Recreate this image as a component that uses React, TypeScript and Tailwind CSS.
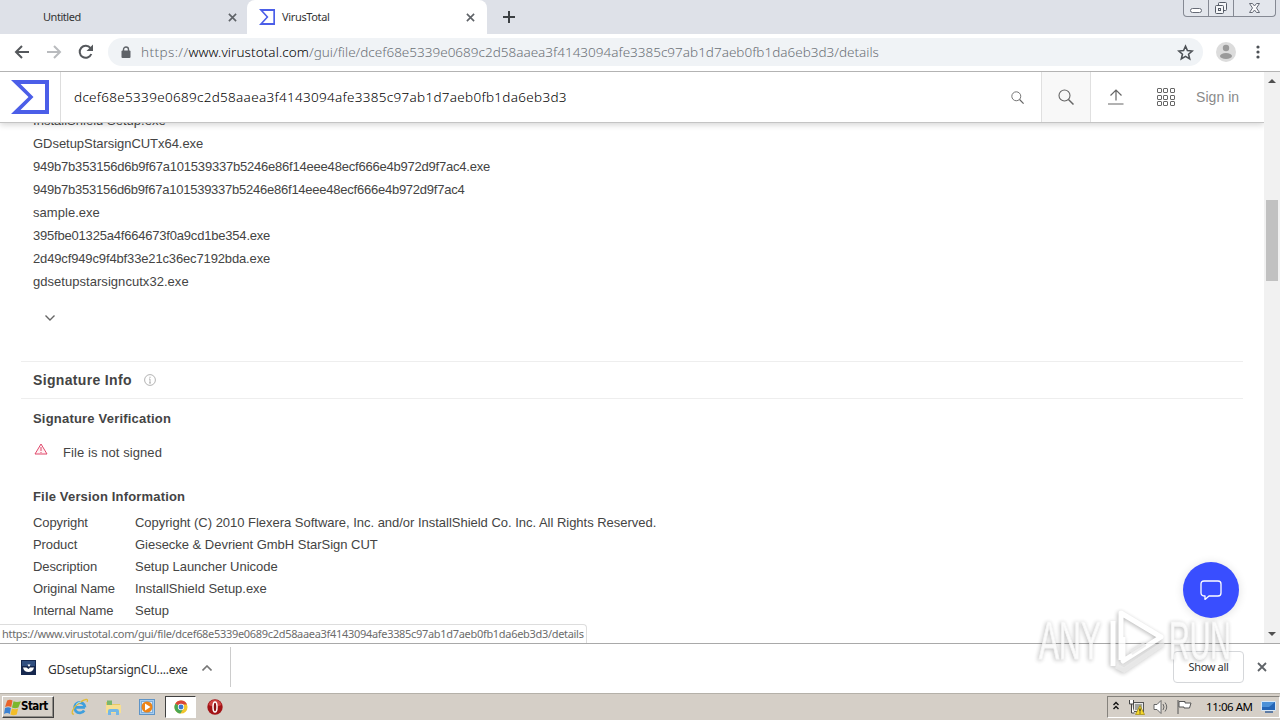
import React from "react";

const HASH = "dcef68e5339e0689c2d58aaea3f4143094afe3385c97ab1d7aeb0fb1da6eb3d3";

const NAMES = [
  { name: "InstallShield Setup.exe", tracking: "tracking-[0.02px]" },
  { name: "GDsetupStarsignCUTx64.exe", tracking: "tracking-[-0.04px]" },
  { name: "949b7b353156d6b9f67a101539337b5246e86f14eee48ecf666e4b972d9f7ac4.exe", tracking: "tracking-[-0.21px]" },
  { name: "949b7b353156d6b9f67a101539337b5246e86f14eee48ecf666e4b972d9f7ac4", tracking: "tracking-[-0.24px]" },
  { name: "sample.exe", tracking: "tracking-[0.04px]" },
  { name: "395fbe01325a4f664673f0a9cd1be354.exe", tracking: "tracking-[-0.2px]" },
  { name: "2d49cf949c9f4bf33e21c36ec7192bda.exe", tracking: "tracking-[-0.14px]" },
  { name: "gdsetupstarsigncutx32.exe", tracking: "tracking-[0.04px]" },
];

const VERSION_INFO = [
  ["Copyright", "Copyright (C) 2010 Flexera Software, Inc. and/or InstallShield Co. Inc. All Rights Reserved."],
  ["Product", "Giesecke & Devrient GmbH StarSign CUT"],
  ["Description", "Setup Launcher Unicode"],
  ["Original Name", "InstallShield Setup.exe"],
  ["Internal Name", "Setup"],
];

function Cross({ className }: { className: string }) {
  return (
    <svg viewBox="0 0 10 10" className={className} fill="none" stroke="#5f6368" strokeWidth="1.8">
      <path d="M1 1l8 8M9 1l-8 8" />
    </svg>
  );
}

function Sigma({ className }: { className: string }) {
  return (
    <svg viewBox="0 0 38 34" className={className} preserveAspectRatio="none">
      <path d="M0 0h38v34H0l17.5-17z M9.5 4l13 13-13 13H34V4z" fill="#4b5ee8" fillRule="evenodd" />
    </svg>
  );
}

function Magnifier({ className }: { className: string }) {
  return (
    <svg viewBox="0 0 16 16" className={className} fill="none" stroke="#666" strokeWidth="1.1">
      <circle cx="6.5" cy="6.5" r="5.5" />
      <path d="M10.5 10.5l5 5" strokeWidth="1.5" />
    </svg>
  );
}

function TabStrip() {
  return (
    <div className="relative flex h-[34px] shrink-0 bg-[#dee1e8] text-[11px] text-[#333]">
      <div className="flex w-[247px] items-center rounded-br-lg pl-[43px] pr-[10px]">
        <span className="tracking-[-0.45px]">Untitled</span>
        <Cross className="ml-auto size-[9px]" />
      </div>
      <div className="flex w-[240px] items-center rounded-t-lg bg-white pl-3 pr-3">
        <Sigma className="h-4 w-[16px]" />
        <span className="ml-[7px] tracking-[-0.35px]">VirusTotal</span>
        <Cross className="ml-auto size-[9px]" />
      </div>
      <div className="flex items-center pl-4">
        <svg viewBox="0 0 12 12" className="size-3" stroke="#3c4043" strokeWidth="2">
          <path d="M6 0v12M0 6h12" />
        </svg>
      </div>
      <div className="ml-auto mr-[4px] flex h-[17px] w-[93px] rounded-b border border-t-0 border-[#858993] bg-[#e3e6ec]">
        <div className="flex w-[25px] items-end justify-center border-r border-[#858993] pb-[3px]">
          <div className="h-[5px] w-[12px] rounded-sm border border-[#666b76] bg-white" />
        </div>
        <div className="flex w-[25px] items-center justify-center border-r border-[#858993]">
          <svg viewBox="0 0 14 14" className="size-[14px]" fill="#f5f6f8" stroke="#555b66">
            <rect x="4.5" y="1.5" width="8" height="8" rx="1" />
            <rect x="1.5" y="4.5" width="8" height="8" rx="1" />
            <rect x="4.5" y="7.5" width="2" height="2" />
          </svg>
        </div>
        <div className="flex grow items-center justify-center">
          <svg viewBox="0 0 13 12" className="h-3 w-[13px]" fill="#f8f8fa" stroke="#666b76">
            <path d="M1.500 1.500h3L6.500 4l2-2.500h3L8.500 6l3 4.500h-3L6.500 8l-2 2.500h-3L4.500 6z" />
          </svg>
        </div>
      </div>
    </div>
  );
}

function AddressBar() {
  return (
    <div className="flex h-[38px] shrink-0 items-center border-b border-[#b3b3b3] bg-white pb-px pl-[14px]">
      <svg viewBox="0 0 16 14" className="h-[14px] w-4" fill="none" stroke="#55585c" strokeWidth="2">
        <path d="M15 7H2M8 1L2 7l6 6" />
      </svg>
      <svg viewBox="0 0 16 14" className="ml-4 h-[14px] w-4" fill="none" stroke="#b9bbbe" strokeWidth="2">
        <path d="M1 7h13M8 1l6 6-6 6" />
      </svg>
      <svg viewBox="0 0 16 16" className="ml-4 size-4" fill="none" stroke="#55585c" strokeWidth="2">
        <path d="M13.300 10A6 6 0 1 1 12.500 4.200" />
        <path d="M15 0.500v6.500H8.500z" fill="#55585c" stroke="none" />
      </svg>
      <div className="ml-[14px] flex h-7 w-[1095px] items-center rounded-full bg-[#f0f3f6] pl-[13px] pr-[9px]">
        <svg viewBox="0 0 10 13" className="h-[13px] w-[10px]">
          <path d="M2.500 5V3.500a2.500 2.500 0 0 1 5 0V5" fill="none" stroke="#5f6368" strokeWidth="1.400" />
          <rect x="0.500" y="4.500" width="9" height="7.500" rx="1" fill="#5f6368" />
        </svg>
        <span className="ml-[10px] mt-px whitespace-nowrap text-[13.500px] font-light text-[#6c7176]">
          <span className="tracking-[0.400px]">https://</span>
          <span className="tracking-[0.080px] text-black">www.virustotal.com</span>
          <span className="tracking-[0.005px]">/gui/file/{HASH}/details</span>
        </span>
        <svg viewBox="0 0 24 24" className="ml-auto size-[17px]" fill="none" stroke="#4d5156" strokeWidth="2.200">
          <path d="M12 3l2.700 6.300 6.800.6-5.200 4.500 1.600 6.700L12 17.500l-5.900 3.600 1.600-6.700-5.200-4.500 6.800-.6z" />
        </svg>
      </div>
      <svg viewBox="0 0 20 20" className="ml-[13px] size-5">
        <circle cx="10" cy="10" r="10" fill="#dcdcdc" />
        <circle cx="10" cy="6" r="3.200" fill="#9a9a9a" />
        <ellipse cx="10" cy="14" rx="6" ry="3" fill="#9a9a9a" />
      </svg>
      <svg viewBox="0 0 4 14" className="ml-[20px] h-[14px] w-1" fill="#4d5156">
        <circle cx="2" cy="2" r="1.600" />
        <circle cx="2" cy="7" r="1.600" />
        <circle cx="2" cy="12" r="1.600" />
      </svg>
    </div>
  );
}

function SiteHeader() {
  return (
    <header className="relative z-10 flex h-[51px] shrink-0 border-b border-[#c4c4c4] bg-white shadow-[0_2px_6px_rgba(0,0,0,0.16)]">
      <div className="flex w-[61px] items-center border-r border-[#ddd] pl-[11px]">
        <Sigma className="h-[34px] w-[38px]" />
      </div>
      <div className="flex grow items-center pl-[13px] pr-[17px]">
        <span className="mt-px text-[13.500px] font-light tracking-[0.300px] text-black">{HASH}</span>
        <Magnifier className="ml-auto size-[13px]" />
      </div>
      <div className="flex w-[50px] items-center justify-center border-x border-[#e0e0e0] bg-[#f8f8f8]">
        <Magnifier className="size-4" />
      </div>
      <div className="flex w-[173px] items-center pl-[16px]">
        <svg viewBox="0 0 18 16" className="h-4 w-[18px]" fill="none" stroke="#666" strokeWidth="1.200">
          <path d="M9 11.500V1M3.500 6.500L9 1l5.500 5.500M1 15h15.500" />
        </svg>
        <svg viewBox="0 0 19 20" className="ml-[31px] h-5 w-[19px]" fill="none" stroke="#666" strokeWidth="1">
          {[1.5, 8.5, 14.5].map((y) =>
            [1.5, 7.5, 14.5].map((x) => <rect key={`${x}-${y}`} x={x} y={y} width="4" height="4" rx="0.500" />)
          )}
        </svg>
        <span className="ml-[21px] whitespace-nowrap font-['Liberation_Sans',sans-serif] text-[14px] tracking-[0.050px] text-[#8a8a8a]">Sign in</span>
      </div>
    </header>
  );
}

function Details() {
  return (
    <main className="h-[520px] overflow-hidden px-[21px] font-['Liberation_Sans',sans-serif] text-[13px] text-[#444]">
      <ul className="-mt-[14px] pl-3 leading-[23px]">
        {NAMES.map(({ name, tracking }) => (
          <li key={name} className={tracking}>{name}</li>
        ))}
      </ul>
      <svg viewBox="0 0 10 6" className="ml-[24px] mt-[22px] h-[6px] w-[10px]" fill="none" stroke="#666" strokeWidth="1.400">
        <path d="M0.500 0.500L5 5l4.500-4.500" />
      </svg>
      <h2 className="mt-[40px] flex h-[38px] items-center border-y border-[#eee] pl-3 text-[14px] font-bold tracking-[0.340px]">
        Signature Info
        <svg viewBox="0 0 12 12" className="ml-3 size-3" fill="none" stroke="#aaa" strokeWidth="0.900">
          <circle cx="6" cy="6" r="5.400" />
          <path d="M6 5v4M6 2.700v1.300M5 5h1M5 9h2" />
        </svg>
      </h2>
      <div className="pl-3">
        <h3 className="mt-[10px] text-[13px] font-bold leading-5 tracking-[0.200px]">Signature Verification</h3>
        <p className="mt-[14px] flex h-5 items-center tracking-[0.080px]">
          <svg viewBox="0 0 14 12" className="-mt-[8px] ml-[1px] h-3 w-[14px]" fill="#fff0f3" stroke="#e0486b" strokeWidth="1">
            <path d="M7 1l6 10H1z" />
            <path d="M7 4v4M7 9v1" />
          </svg>
          <span className="ml-[15px]">File is not signed</span>
        </p>
        <h3 className="mt-6 text-[13px] font-bold leading-5 tracking-[0.170px]">File Version Information</h3>
        <dl className="mt-[5px] grid grid-cols-[102px_1fr] leading-[22px] tracking-[-0.020px]">
          {VERSION_INFO.map(([k, v]) => (
            <React.Fragment key={k}>
              <dt className="tracking-[-0.090px]">{k}</dt>
              <dd>{v}</dd>
            </React.Fragment>
          ))}
        </dl>
      </div>
    </main>
  );
}

function Scrollbar() {
  return (
    <div className="flex w-4 shrink-0 flex-col items-center bg-[#f1f1f1]">
      <svg viewBox="0 0 8 4" className="mt-[7px] h-1 w-2 shrink-0" fill="#505050"><path d="M0 4l4-4 4 4z" /></svg>
      <div className="mt-[117px] h-[81px] w-3 bg-[#c1c1c1]" />
      <svg viewBox="0 0 8 4" className="mb-[7px] mt-auto h-1 w-2 shrink-0" fill="#505050"><path d="M0 0l4 4 4-4z" /></svg>
    </div>
  );
}

function DownloadBar() {
  return (
    <div className="flex h-[50px] shrink-0 items-center border-t border-[#a9a9a9] bg-white pb-[3px] pr-[13px] text-[#333]">
      <div className="flex h-10 w-[231px] items-center border-r border-[#ccc] pl-[21px]">
        <svg viewBox="0 0 15 15" className="size-[15px]">
          <rect width="15" height="15" fill="#16284e" />
          <path d="M1 1h13v5H1z" fill="#304f80" />
          <path d="M2 7.500h3.500l2 1.500 1.500-1.500h4q-1 4.500-5.500 4.500T2 7.500zM6.500 4.500h3l-1.500 2.500z" fill="#fff" />
        </svg>
        <span className="ml-3 mt-[5px] text-[12px] tracking-[-0.17px]">GDsetupStarsignCU....exe</span>
        <svg viewBox="0 0 10 6" className="ml-auto mr-[18px] mt-[2px] h-[6px] w-[10px]" fill="none" stroke="#777" strokeWidth="1.600">
          <path d="M0.500 5.500L5 1l4.500 4.500" />
        </svg>
      </div>
      <button className="ml-auto h-8 w-[71px] rounded border border-[#d5d7da] bg-white text-[11px] tracking-[-0.350px]">Show all</button>
      <Cross className="ml-[13px] size-[10px]" />
    </div>
  );
}

function Taskbar() {
  return (
    <div className="flex h-[27px] shrink-0 items-center border-t border-[#b5b1a9] bg-[#d5cfc7] pl-[2px]">
      <div className="flex h-[22px] w-[52px] items-center border border-b-[#404040] border-l-white border-r-[#404040] border-t-white pl-px shadow-[inset_-1px_-1px_#918e88]">
        <svg viewBox="0 0 16 16" className="size-[17px] shrink-0">
          <path d="M3 1.500Q5.500 0 8 1.500L6.800 7.500Q4 6 1 7.500z" fill="#e9632a" />
          <path d="M9 2q3 1.500 7 0L13.500 8q-3 1.500-6 0z" fill="#7bb72e" />
          <path d="M1 8.500q3-1.500 5.500 0L5.500 14Q3 12.500 0 14z" fill="#3c82d2" />
          <path d="M7.500 9q3 1.500 5.800 0L12 14.500q-3 1.500-6 0z" fill="#f3bd27" />
        </svg>
        <span className="font-['DejaVu_Sans_Condensed','DejaVu_Sans',sans-serif] text-[11.500px] font-bold tracking-[-0.550px] text-black">Start</span>
      </div>
      <svg viewBox="0 0 18 18" className="ml-[17px] size-[18px]" fill="none">
        <path d="M14 9.300H4.500M14 9.300A5.200 5.200 0 1 0 13.200 12.500" stroke="#3f9fdd" strokeWidth="2.800" />
        <path d="M3 16C-1 17 2 9 8 5s10-5 8-1" stroke="#e2bc37" strokeWidth="1.300" />
        <path d="M5 6.500q2-2.500 5-2.500" stroke="#a8e0f7" />
      </svg>
      <svg viewBox="0 0 17 17" className="ml-[16px] size-[17px]">
        <path d="M1 3h5l1 2h8v9H1z" fill="#e8c864" />
        <path d="M2 1.500h5V6H2z" fill="#7ab66d" />
        <path d="M1 6h15v8H1z" fill="#f7df91" />
        <path d="M3 16v-4q0-2 2-2h7q2 0 2 2v4h-3v-3H6v3z" fill="#74b7e6" />
      </svg>
      <svg viewBox="0 0 16 16" className="ml-[17px] size-4">
        <rect x="0.500" y="0.500" width="15" height="15" fill="#a7cdf0" stroke="#5e94c7" />
        <rect x="2.500" y="2.500" width="11" height="11" fill="#d9ebfa" stroke="#7eaedb" />
        <circle cx="8" cy="8" r="5.500" fill="#ed8418" />
        <path d="M6 4.500l5.500 3.500L6 11.500z" fill="#fff" />
      </svg>
      <div className="ml-[10px] flex h-[22px] w-[31px] items-center justify-center border border-b-white border-l-[#404040] border-r-white border-t-[#404040] bg-white">
        <svg viewBox="0 0 16 16" className="size-[14px]">
          <circle cx="8" cy="8" r="7.500" fill="#f2c62d" />
          <path d="M8 8L1.500 4.200A7.500 7.500 0 0 1 14.800 5H8z" fill="#d9453a" />
          <path d="M8 8L1.500 4.200A7.500 7.500 0 0 0 7.300 15.500L11 9.500z" fill="#49a653" />
          <circle cx="8" cy="8" r="3.600" fill="#fff" />
          <circle cx="8" cy="8" r="2.800" fill="#3c79d0" />
        </svg>
      </div>
      <svg viewBox="0 0 16 16" className="ml-[11px] size-4">
        <circle cx="8" cy="8" r="7.700" fill="#a31316" />
        <path d="M1.500 6a6.700 6.700 0 0 1 13 0q-6.500 3-13 0" fill="#cf4443" />
        <ellipse cx="8" cy="8" rx="2" ry="5" fill="#8a0f12" stroke="#fff" strokeWidth="1.500" />
      </svg>
      <div className="ml-auto flex h-[22px] w-[173px] items-center border border-b-white border-l-[#85827c] border-r-white border-t-[#85827c] pl-[5px]">
        <svg viewBox="0 0 6 9" className="mb-[3px] h-[9px] w-[6px]" fill="none" stroke="#111" strokeWidth="1.400">
          <path d="M0.500 4L3 1.500 5.500 4M0.500 8L3 5.500 5.500 8" />
        </svg>
        <svg viewBox="0 0 16 16" className="ml-[10px] size-4">
          <rect x="4.500" y="3.500" width="10" height="9" fill="#e8e8e8" stroke="#555" />
          <rect x="6" y="5" width="7" height="6" fill="#a0a39d" />
          <path d="M.5 1v4h4V1M2.500 5v9h3" fill="#fff" stroke="#444" />
          <path d="M11 6.500l4.500 9h-9z" fill="#f6d72c" stroke="#9d860d" strokeWidth=".7" />
          <path d="M11 9.500v3M11 13.500v1" stroke="#222" strokeWidth="1.200" />
        </svg>
        <svg viewBox="0 0 16 16" className="ml-[8px] size-4" fill="#fff" stroke="#666">
          <path d="M1 5.500h3l4-4v13l-4-4H1z" />
          <path d="M10 5q2 3 0 6M12 3.500q3.500 4.500 0 9" fill="none" />
        </svg>
        <svg viewBox="0 0 16 16" className="ml-[7px] size-4" fill="#fff" stroke="#555">
          <path d="M2 1v14M3 2.500h6v1.500h6L13.500 9H8V8H3z" />
        </svg>
        <span className="ml-[14px] whitespace-nowrap text-[11.500px] tracking-[-0.450px] text-black">11:06 AM</span>
        <svg viewBox="0 0 16 14" className="ml-auto mr-[2px] h-[14px] w-4">
          <path d="M0.500 1.500h14v9h-14z" fill="#2465b6" stroke="#d8e8f7" />
          <path d="M1 2h13L8 7H1z" fill="#4c91d8" />
          <path d="M4 13h8v-2H4z" fill="#5e7ca5" />
        </svg>
      </div>
    </div>
  );
}

function Watermark() {
  return (
    <svg viewBox="0 0 200 72" className="pointer-events-none absolute left-[1036px] top-[606px] h-[72px] w-[200px] opacity-80 drop-shadow-[-1px_1px_2px_rgba(0,0,0,0.350)]">
      <g fill="#fff" fillOpacity="0.900" stroke="#f2f2f2" strokeWidth="1.200" fontFamily="Liberation Sans Narrow, Liberation Sans, sans-serif" fontSize="54">
        <text x="3" y="53" textLength="62" lengthAdjust="spacingAndGlyphs">ANY</text>
        <text x="133" y="53" textLength="62" lengthAdjust="spacingAndGlyphs">RUN</text>
      </g>
      <path d="M77 60V15M85 54V7l40 24-38 24V31" fill="none" stroke="#fff" strokeWidth="5" strokeLinejoin="round" />
      <path d="M80 60l8 4 40-27M95 47l14-9" fill="none" stroke="#e6e6e6" strokeWidth="5" strokeOpacity="0.800" />
    </svg>
  );
}

export default function App() {
  return (
    <div className="relative flex h-[720px] w-[1280px] flex-col overflow-hidden bg-white font-['Noto_Sans','Open_Sans',sans-serif]">
      <TabStrip />
      <AddressBar />
      <div className="flex h-[571px] shrink-0">
        <div className="relative w-[1264px] overflow-hidden">
          <SiteHeader />
          <Details />
          <button aria-label="Chat" className="absolute left-[1183px] top-[490px] flex size-14 items-center justify-center rounded-full bg-[#394eff] shadow-[0_1px_10px_rgba(0,0,0,0.12)]">
            <svg viewBox="0 0 22 20" className="h-5 w-[22px]" fill="none" stroke="#fff" strokeWidth="1.300">
              <path d="M4 1h14q3 0 3 3v9q0 3-3 3H9l-4 3.500V16q-4 0-4-3V4q0-3 3-3z" strokeLinejoin="round" />
            </svg>
          </button>
          <div className="absolute bottom-0 left-0 flex h-[19px] w-[587px] items-center whitespace-nowrap rounded-tr border-r border-t border-[#ddd] bg-white pl-[2px] pt-px text-[11px] tracking-[-0.310px] text-[#6c6c6c]">
            https://www.virustotal.com/gui/file/{HASH}/details
          </div>
        </div>
        <Scrollbar />
      </div>
      <DownloadBar />
      <Taskbar />
      <Watermark />
    </div>
  );
}
